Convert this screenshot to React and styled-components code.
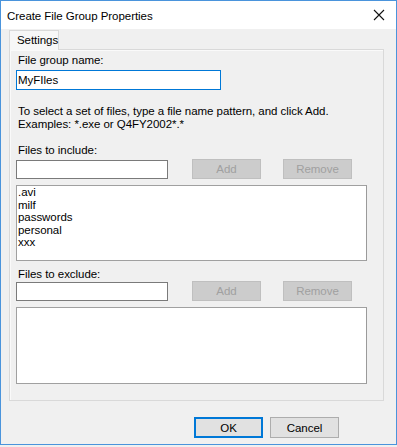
import styled, { createGlobalStyle } from "styled-components";

const Global = createGlobalStyle`
    html, body {
        margin: 0;
        padding: 0;
        background: #f0f0f0;
    }
    * {
        box-sizing: border-box;
    }
`

const includeFiles = [".avi", "milf", "passwords", "personal", "xxx"];

export default function App() {
    return (
        <>
            <Global />
            <Window>
                <TitleBar>
                    <Title>Create File Group Properties</Title>
                    <CloseButton>
                        <svg width="12" height="12" viewBox="0 0 12 12">
                            <path d="M1 1 L11 11 M11 1 L1 11" stroke="#111" strokeWidth="1.1" fill="none" />
                        </svg>
                    </CloseButton>
                </TitleBar>
                <Body>
                    <TabStrip>
                        <Tab>Settings</Tab>
                    </TabStrip>
                    <Panel>
                        <Label top={4}>File group name:</Label>
                        <TextBox width={205} height={20} top={3} focused defaultValue="MyFIles" />
                        <Help>
                            To select a set of files, type a file name pattern, and click Add.<br />
                            Examples: *.exe or Q4FY2002*.*
                        </Help>
                        <Label top={13}>Files to include:</Label>
                        <Row top={2}>
                            <TextBox width={152} height={19} top={1} />
                            <DisabledButton left={24}>Add</DisabledButton>
                            <DisabledButton left={22}>Remove</DisabledButton>
                        </Row>
                        <ListBox top={6} height={76}>
                            {includeFiles.map((f) => (
                                <li key={f}>{f}</li>
                            ))}
                        </ListBox>
                        <Label top={7}>Files to exclude:</Label>
                        <Row top={0}>
                            <TextBox width={152} height={19} top={1} />
                            <DisabledButton left={24}>Add</DisabledButton>
                            <DisabledButton left={22}>Remove</DisabledButton>
                        </Row>
                        <ListBox top={6} height={77} />
                    </Panel>
                    <Footer>
                        <DialogButton primary>OK</DialogButton>
                        <DialogButton>Cancel</DialogButton>
                    </Footer>
                </Body>
            </Window>
        </>
    )
}

const Window = styled.div`
    width: 397px;
    height: 445px;
    border: 1px solid #4a94dc;
    background-color: #f0f0f0;
    display: flex;
    flex-direction: column;
    font-family: "Liberation Sans", Arial, sans-serif;
    font-size: 11.5px;
    letter-spacing: -0.05px;
    color: #000;
`
const TitleBar = styled.div`
    height: 28px;
    background-color: #ffffff;
    display: flex;
    align-items: center;
    justify-content: space-between;
    padding-left: 6px;
`
const Title = styled.div`
    font-size: 11.5px;
    margin-top: 1px;
`
const CloseButton = styled.div`
    width: 46px;
    height: 28px;
    display: flex;
    align-items: center;
    justify-content: center;
    margin-right: -6px;
`
const Body = styled.div`
    flex: 1;
    padding: 1px 12px 0 8px;
    display: flex;
    flex-direction: column;
`
const TabStrip = styled.div`
    display: flex;
    height: 19px;
    position: relative;
    z-index: 1;
`
const Tab = styled.div`
    width: 50px;
    height: 20px;
    border: 1px solid #d9d9d9;
    border-bottom: none;
    background-color: #f7f7f7;
    padding-left: 7px;
    line-height: 18px;
`
const Panel = styled.div`
    height: 352px;
    border: 1px solid #d9d9d9;
    box-shadow: inset 1px 1px 0 #fafafa;
    padding: 0 6px;
    display: flex;
    flex-direction: column;
`
const Label = styled.div`
    line-height: 13px;
    margin-top: ${(p) => p.top}px;
    padding-left: 2px;
`
const TextBox = styled.input`
    width: ${(p) => p.width}px;
    height: ${(p) => p.height}px;
    margin-top: ${(p) => p.top}px;
    border: 1px solid ${(p) => (p.focused ? "#0078d7" : "#7a7a7a")};
    background: #fff;
    padding: 0 1px;
    font-family: inherit;
    font-size: 11.5px;
    color: #000;
    outline: none;
`
const Help = styled.div`
    margin-top: 15px;
    line-height: 13px;
    padding-left: 2px;
`
const Row = styled.div`
    display: flex;
    align-items: flex-start;
    margin-top: ${(p) => p.top}px;
`
const DisabledButton = styled.div`
    width: 69px;
    height: 20px;
    margin-left: ${(p) => p.left}px;
    background-color: #cccccc;
    border: 1px solid #bfbfbf;
    color: #a0a0a0;
    display: flex;
    align-items: center;
    justify-content: center;
`
const ListBox = styled.ul`
    list-style: none;
    margin: ${(p) => p.top}px 0 0 0;
    width: 351px;
    height: ${(p) => p.height}px;
    border: 1px solid #a0a0a0;
    border-right-color: #9a9a9a;
    background: #fff;
    padding: 0 0 0 1px;
    li {
        line-height: 12.5px;
    }
`
const Footer = styled.div`
    display: flex;
    justify-content: flex-end;
    gap: 7px;
    margin-top: 16px;
    padding-right: 45px;
`
const DialogButton = styled.div`
    width: 69px;
    height: 21px;
    background-color: #e1e1e1;
    border: ${(p) => (p.primary ? "2px solid #0078d7" : "1px solid #adadad")};
    display: flex;
    align-items: center;
    justify-content: center;
`
